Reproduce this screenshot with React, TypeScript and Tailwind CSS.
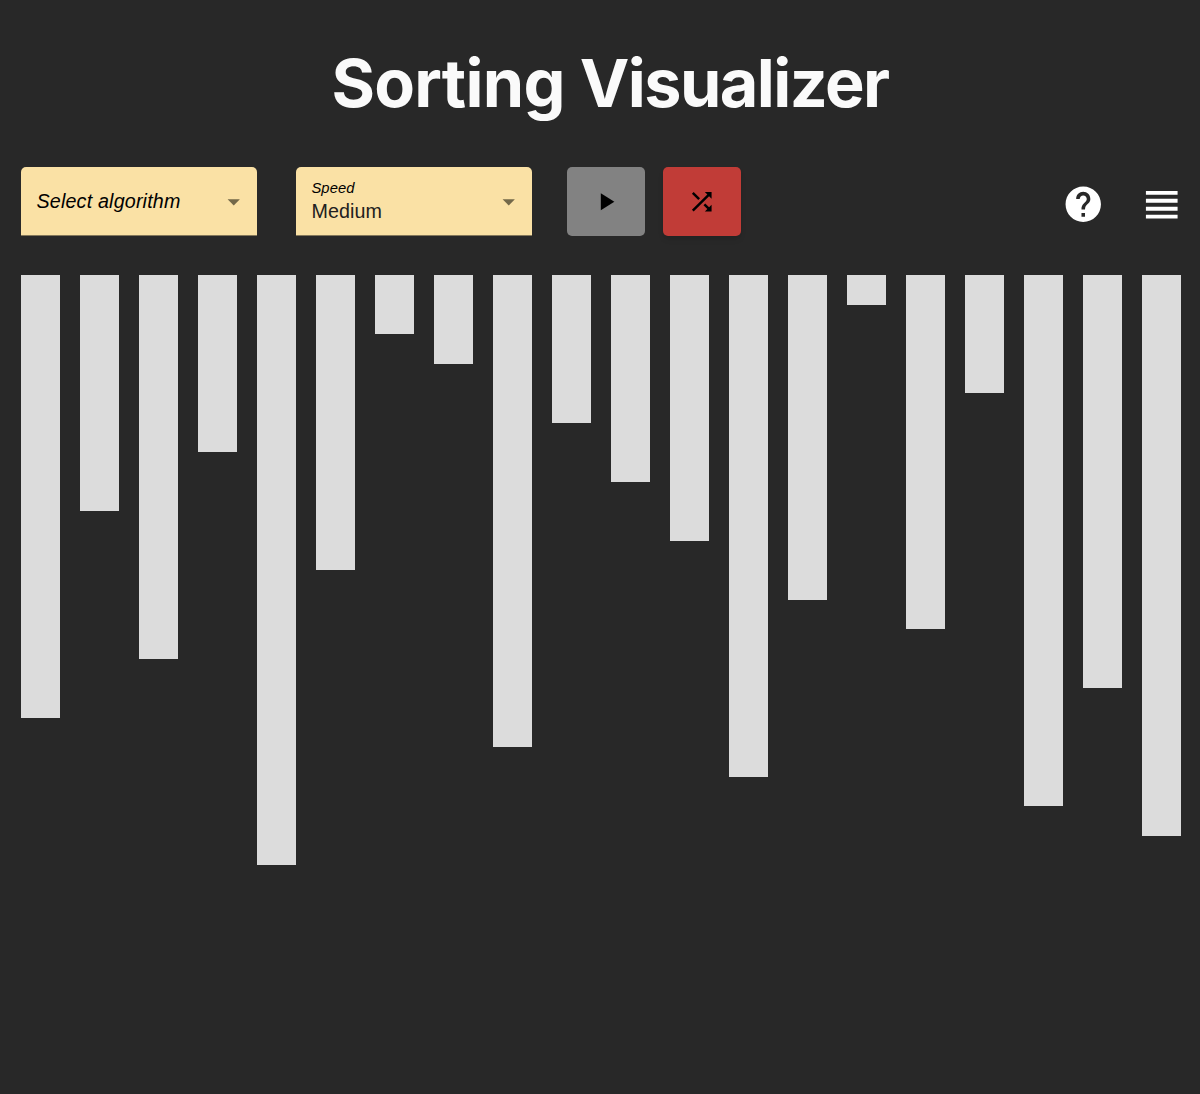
import type { ReactNode } from "react";

const values = [15, 8, 13, 6, 20, 10, 2, 3, 16, 5, 7, 9, 17, 11, 1, 12, 4, 18, 14, 19];
const UNIT = 29.5;

function Icon({ d, className }: { d: string; className: string }) {
  return (
    <svg viewBox="0 0 24 24" fill="currentColor" className={className} aria-hidden="true">
      <path d={d} />
    </svg>
  );
}

function Select({ className = "", children }: { className?: string; children: ReactNode }) {
  return (
    <button
      className={`flex h-[69px] w-[236px] items-center justify-between rounded-t-[5px] border-b border-[#83775a] bg-[#fae1a5] pt-px pr-[9px] pl-[15px] text-left ${className}`}
    >
      {children}
      <Icon d="M7 10l5 5 5-5z" className="size-[29.5px] text-[#736849]" />
    </button>
  );
}

export default function App() {
  return (
    <div className="min-h-[1094px] w-[1200px] bg-[#282828] px-[21px] pt-[41px] font-['Liberation_Sans',Arial,sans-serif]">
      <h1 className="h-[84px] pl-[20px] text-center font-['Inter',sans-serif] text-[66.5px] leading-[84px] font-bold whitespace-nowrap text-[#fafafa]">
        <span className="tracking-[-0.75px]">Sorting </span>
        <span className="tracking-[-1.55px]">Visualizer</span>
      </h1>
      <div className="mt-[42px] flex h-[69px] items-start">
        <Select>
          <span className="pl-[0.5px] text-[19.7px] tracking-[0.18px] text-black italic">Select algorithm</span>
        </Select>
        <Select className="ml-[39.4px]">
          <span className="flex flex-col">
            <span className="text-[14.75px] leading-[20px] tracking-[0.1px] text-black italic">Speed</span>
            <span className="text-[19.7px] leading-[27px] tracking-[0.12px] text-[#212020]">Medium</span>
          </span>
        </Select>
        <button
          aria-label="Play"
          className="ml-[34.4px] flex h-[69px] w-[78.6px] items-center justify-center rounded-[5px] bg-[#828282] text-black"
        >
          <Icon d="M8 5v14l11-7z" className="size-[29.5px]" />
        </button>
        <button
          aria-label="Shuffle"
          className="ml-[17.2px] flex h-[69px] w-[78.6px] items-center justify-center rounded-[5px] bg-[#c13c37] text-black shadow-md"
        >
          <Icon
            d="M10.59 9.17L5.41 4 4 5.41l5.17 5.17 1.42-1.41zM14.5 4l2.04 2.04L4 18.59 5.41 20 17.96 7.46 20 9.5V4h-5.5zm.33 9.41l-1.41 1.41 3.13 3.13L14.5 20H20v-5.5l-2.04 2.04-3.13-3.13z"
            className="size-[29.5px]"
          />
        </button>
        <div className="mt-[14px] -mr-[6px] ml-auto flex items-start gap-[33px] text-white">
          <button aria-label="Help" className="mt-[2px]">
            <Icon
              d="M12 2C6.48 2 2 6.48 2 12s4.48 10 10 10 10-4.48 10-10S17.52 2 12 2zm1 17h-2v-2h2v2zm2.07-7.75l-.9.92C13.45 12.9 13 13.5 13 15h-2v-.5c0-1.1.45-2.1 1.17-2.83l1.24-1.26c.37-.36.59-.86.59-1.41 0-1.1-.9-2-2-2s-2 .9-2 2H8c0-2.21 1.79-4 4-4s4 1.79 4 4c0 .88-.36 1.68-.93 2.25z"
              className="size-[42.5px]"
            />
          </button>
          <button aria-label="Orientation">
            <Icon
              d="M4 15h16v-2H4v2zm0 4h16v-2H4v2zm0-8h16V9H4v2zm0-6v2h16V5H4z"
              className="size-[47.5px]"
            />
          </button>
        </div>
      </div>
      <div className="-mr-[3px] mt-[39px] flex w-[1160.5px] items-start justify-between">
        {values.map((value) => (
          <div key={value} className="w-[39.3px] bg-[#dcdcdc]" style={{ height: value * UNIT }} />
        ))}
      </div>
    </div>
  );
}
